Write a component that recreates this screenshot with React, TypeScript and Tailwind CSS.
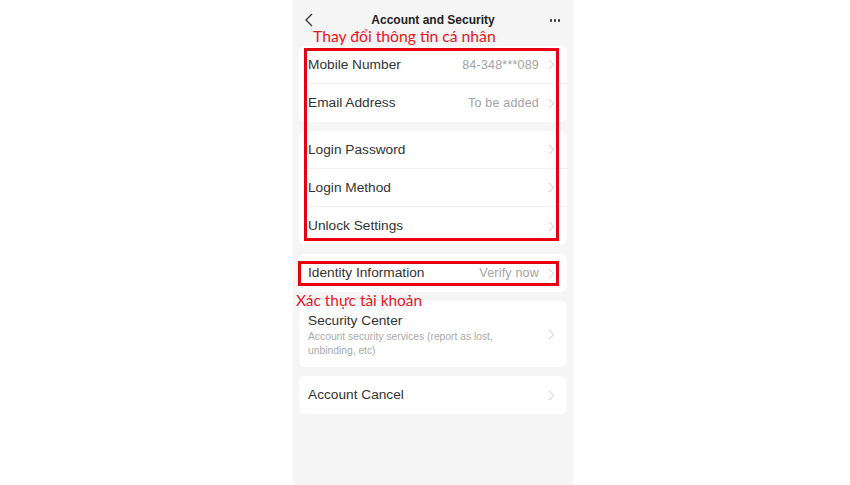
import React from "react";

const Chevron = () => (
  <svg width="7" height="11" viewBox="0 0 7 11" fill="none" className="shrink-0">
    <polyline points="1,1 6,5.5 1,10" stroke="#c9c9c9" strokeWidth="1" />
  </svg>
);

interface RowProps {
  label: string;
  value?: string;
  last?: boolean;
}

const Row: React.FC<RowProps> = ({ label, value, last }) => (
  <div className="flex h-[38px] items-center pl-[9px]">
    <div
      className={`flex h-full flex-1 items-center pr-[12px] ${
        last ? "" : "border-b border-[#efefef]"
      }`}
    >
      <span className="flex-1 pt-[1px] text-[13.7px] text-[#333]">{label}</span>
      {value && (
        <span className="mr-[9px] pt-[1px] text-[12.5px] tracking-[0.2px] text-[#a3a3a3]">
          {value}
        </span>
      )}
      {!value && <span className="mr-[9px]" />}
      <Chevron />
    </div>
  </div>
);

const Card: React.FC<{ children: React.ReactNode }> = ({ children }) => (
  <div className="overflow-hidden rounded-[6px] bg-white">{children}</div>
);

export default function App() {
  return (
    <div className="h-[485px] w-full bg-white font-['Liberation_Sans',Arial,sans-serif]">
      <div className="relative ml-[293px] h-[485px] w-[280px] bg-[#f5f5f5]">
        {/* Header */}
        <div className="relative flex h-[40px] items-center justify-center">
          <svg
            width="8"
            height="14"
            viewBox="0 0 8 14"
            fill="none"
            className="absolute left-[12px] top-[13px]"
          >
            <polyline points="7,1 1,7 7,13" stroke="#333" strokeWidth="1.3" />
          </svg>
          <h1 className="text-[12px] font-bold text-[#222]">Account and Security</h1>
          <div className="absolute right-[13px] top-[19px] flex gap-[1.5px]">
            <span className="h-[2.5px] w-[2.5px] rounded-full bg-[#333]" />
            <span className="h-[2.5px] w-[2.5px] rounded-full bg-[#333]" />
            <span className="h-[2.5px] w-[2.5px] rounded-full bg-[#333]" />
          </div>
        </div>

        {/* Content */}
        <div className="mt-[6px] flex flex-col gap-[9px] px-[6px]">
          <Card>
            <Row label="Mobile Number" value="84-348***089" />
            <Row label="Email Address" value="To be added" last />
          </Card>
          <Card>
            <Row label="Login Password" />
            <Row label="Login Method" />
            <Row label="Unlock Settings" last />
          </Card>
          <Card>
            <Row label="Identity Information" value="Verify now" last />
          </Card>
          <Card>
            <div className="flex h-[66px] items-center pl-[9px] pr-[12px]">
              <div className="flex-1">
                <div className="pt-[3px] text-[13.7px] leading-[16px] text-[#333]">
                  Security Center
                </div>
                <div className="mt-[1px] text-[10.3px] leading-[14px] text-[#aaa]">
                  Account security services (report as lost,
                  <br />
                  unbinding, etc)
                </div>
              </div>
              <Chevron />
            </div>
          </Card>
          <Card>
            <Row label="Account Cancel" last />
          </Card>
        </div>

        {/* Annotations */}
        <div className="absolute left-[20px] top-[27px] font-['Lato',sans-serif] text-[15.7px] leading-[18px] text-[#e8141c]">
          Thay đổi thông tin cá nhân
        </div>
        <div className="absolute left-[11px] top-[48px] h-[193px] w-[255px] border-[3px] border-[#e60012]" />
        <div className="absolute left-[5px] top-[261px] h-[25px] w-[261px] border-[3px] border-[#e60012]" />
        <div className="absolute left-[3px] top-[291px] font-['Lato',sans-serif] text-[15.4px] leading-[18px] text-[#e8141c]">
          Xác thực tài khoản
        </div>
      </div>
    </div>
  );
}
